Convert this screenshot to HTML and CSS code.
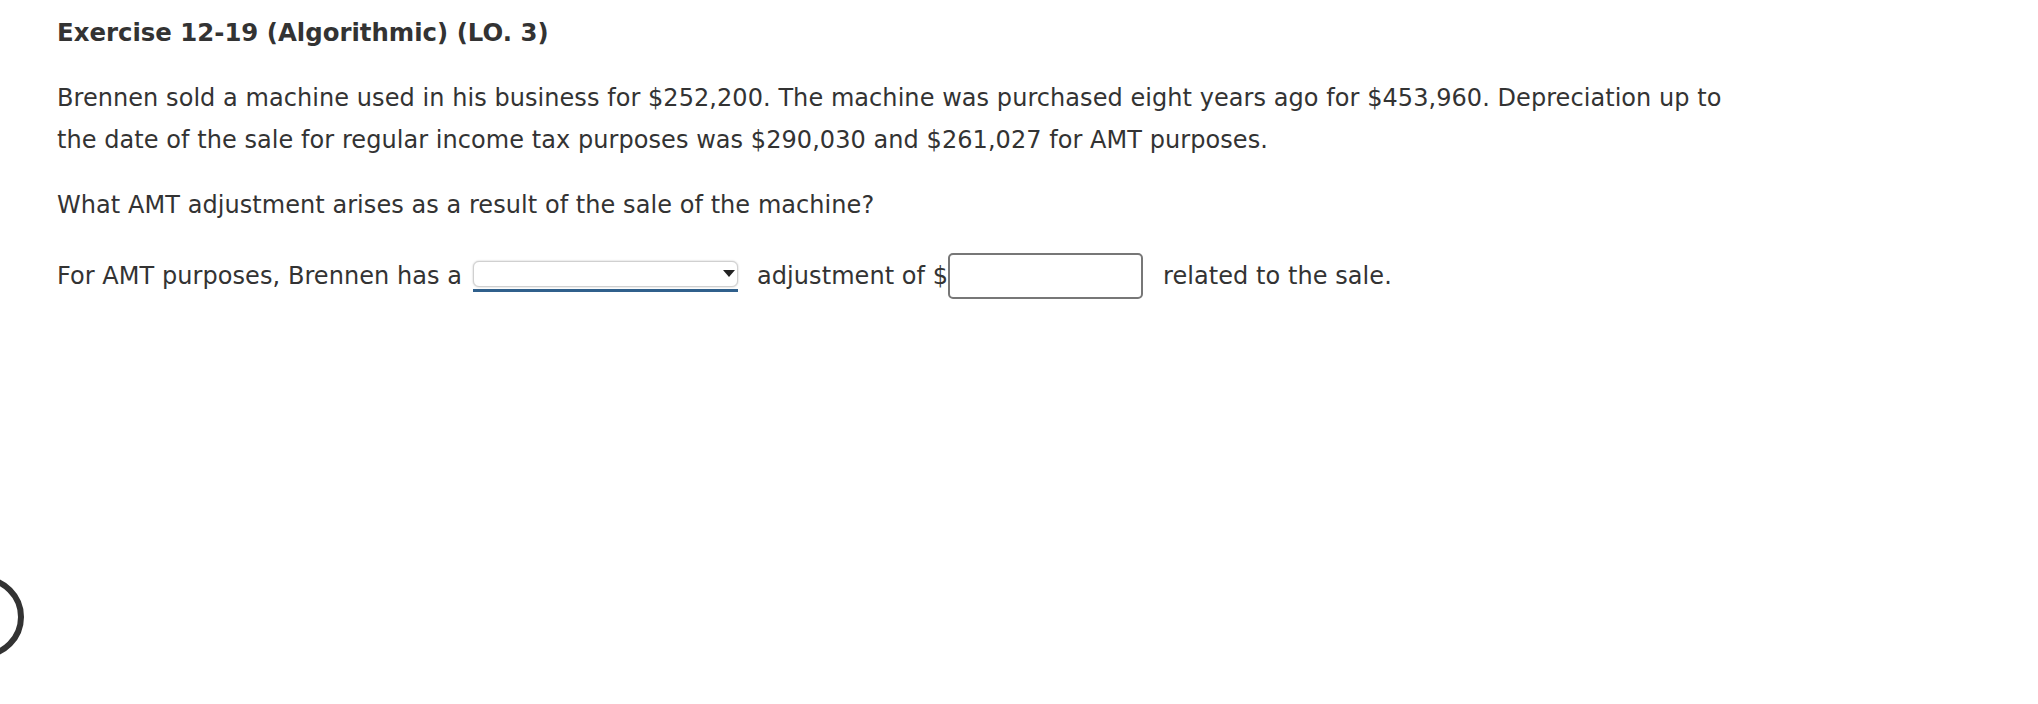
FILE: index.html
```html
<!DOCTYPE html>
<html>
<head>
<meta charset="utf-8">
<link rel="stylesheet" href="styles.css">
</head>
<body>
<div class="page">
  <h1 class="title">Exercise 12-19 (Algorithmic) (LO. 3)</h1>
  <p class="para">Brennen sold a machine used in his business for $252,200. The machine was purchased eight years ago for $453,960. Depreciation up to the date of the sale for regular income tax purposes was $290,030 and $261,027 for AMT purposes.</p>
  <p class="para q">What AMT adjustment arises as a result of the sale of the machine?</p>
  <div class="answer">
    <span>For AMT purposes, Brennen has a</span>
    <span class="select"><span class="box"><span class="arrow"></span></span></span>
    <span class="after">adjustment of $</span><span class="input"></span>
    <span class="tail">related to the sale.</span>
  </div>
</div>
<div class="ring"></div>
</body>
</html>
```
FILE: styles.css
```css
html, body {
  margin: 0;
  padding: 0;
  background: #fff;
}
body {
  font-family: "DejaVu Sans", Verdana, sans-serif;
  color: #333;
  width: 2038px;
  height: 704px;
  overflow: hidden;
  position: relative;
}
.page {
  padding: 18px 0 0 57px;
  width: 1700px;
}
.title {
  margin: 0;
  font-size: 24.4px;
  font-weight: bold;
  line-height: 30px;
}
.para {
  margin: 29px 0 0 0;
  font-size: 24px;
  letter-spacing: 0.06px;
  line-height: 42px;
}
.q {
  margin-top: 23px;
}
.answer {
  margin-top: 27px;
  display: flex;
  align-items: center;
  font-size: 24px;
  letter-spacing: 0.06px;
  line-height: 46px;
}
.select {
  display: flex;
  flex-direction: column;
  margin-left: 11px;
  width: 265px;
  padding-bottom: 2px;
  border-bottom: 3px solid #30608c;
  margin-top: 1px;
}
.box {
  position: relative;
  width: 263px;
  height: 24px;
  border: 1px solid #d0d0d0;
  border-radius: 6px;
  background: #fff;
  box-shadow: 0 0 2px rgba(0, 0, 0, 0.25);
}
.arrow {
  position: absolute;
  right: 2px;
  top: 8px;
  width: 0;
  height: 0;
  border-left: 6px solid transparent;
  border-right: 6px solid transparent;
  border-top: 7px solid #222;
}
.after {
  margin-left: 19px;
}
.input {
  display: inline-block;
  width: 191px;
  height: 42px;
  border: 2px solid #777;
  border-radius: 5px;
  background: #fff;
}
.tail {
  margin-left: 20px;
}
.ring {
  position: absolute;
  left: -58px;
  top: 576px;
  width: 70px;
  height: 70px;
  border: 6px solid #333;
  border-radius: 50%;
}
```
